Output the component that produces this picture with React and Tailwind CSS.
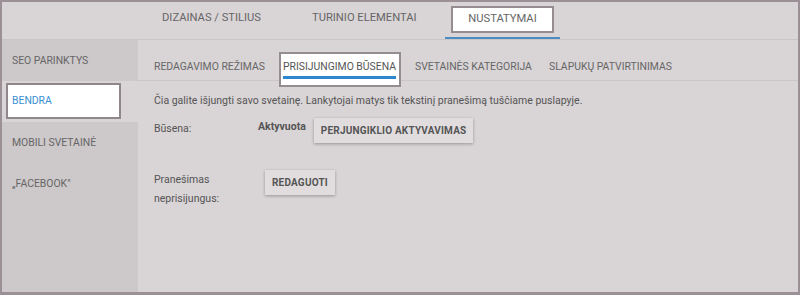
import React from 'react';

const sideItems = ['SEO PARINKTYS', 'BENDRA', 'MOBILI SVETAINĖ', '„FACEBOOK"'];

function Button({ children }) {
    return (
        <button className="h-[25px] px-[7px] bg-[#e1dddf] text-[10px] font-bold text-[#555] shadow-[0_1px_3px_rgba(0,0,0,0.3)] tracking-[0.2px]">
            {children}
        </button>
    );
}

export default function App() {
    return (
        <div className="w-[800px] h-[295px] border-2 border-b-[3px] border-[#9a9096] bg-[#d9d4d6] flex flex-col overflow-hidden" style={{ fontFamily: 'Roboto, "Liberation Sans", sans-serif' }}>
            {/* top tabs */}
            <div className="flex h-[38px] border-b border-[#c9c4c6] text-[11.2px] text-[#666] shrink-0">
                <div className="ml-[160px] w-[150px] flex items-center pb-[4px]">DIZAINAS / STILIUS</div>
                <div className="w-[133px] flex items-center pb-[4px]">TURINIO ELEMENTAI</div>
                <div className="w-[115px] flex flex-col items-center pt-[4px] border-b-[2px] border-[#4d8bc3]">
                    <div className="w-[103px] h-[27px] bg-white border-2 border-[#968d92] flex items-center justify-center">NUSTATYMAI</div>
                </div>
            </div>

            <div className="flex flex-1">
                {/* sidebar */}
                <div className="w-[136px] bg-[#cdc8ca] flex flex-col text-[10.4px] text-[#666]">
                    {sideItems.map((item) =>
                        item === 'BENDRA' ? (
                            <div key={item} className="h-[41px] bg-[#d9d4d6] pl-[4px] pt-[2px]">
                                <div className="w-[115px] h-[36px] bg-white border-2 border-[#8f878b] flex items-center pl-[4px] text-[#3a8fd2]">{item}</div>
                            </div>
                        ) : (
                            <div key={item} className="h-[41px] flex items-center pl-[10px]">{item}</div>
                        )
                    )}
                </div>

                {/* content */}
                <div className="flex-1 flex flex-col">
                    <div className="flex pl-[16px] h-[41px] border-b border-[#cbc6c8] text-[10.4px] text-[#666]">
                        <div className="w-[129px] pt-[20px] leading-[14px]">REDAGAVIMO REŽIMAS</div>
                        <div className="w-[132px] relative">
                            <div className="absolute -left-[4px] w-[122px] top-[12px] h-[35px] bg-white border-2 border-[#968d92]"></div>
                            <div className="relative inline-block pt-[20px] leading-[14px] text-[#555]">
                                PRISIJUNGIMO BŪSENA
                                <div className="mt-[2px] h-[3px] bg-[#2e86cf]"></div>
                            </div>
                        </div>
                        <div className="w-[134px] pt-[20px] leading-[14px]">SVETAINĖS KATEGORIJA</div>
                        <div className="pt-[20px] leading-[14px]">SLAPUKŲ PATVIRTINIMAS</div>
                    </div>

                    <div className="pl-[16px] text-[10.5px] text-[#555]">
                        <p className="mt-[12px] leading-[16px]">Čia galite išjungti savo svetainę. Lankytojai matys tik tekstinį pranešimą tuščiame puslapyje.</p>

                        <div className="flex mt-[9px]">
                            <div className="w-[104px] pt-[3px] leading-[16px]">Būsena:</div>
                            <div className="pt-[1px] leading-[16px] font-bold text-[#555]">Aktyvuota</div>
                            <div className="ml-[8px]"><Button>PERJUNGIKLIO AKTYVAVIMAS</Button></div>
                        </div>

                        <div className="flex mt-[27px]">
                            <div className="w-[111px] leading-[19px] pt-[0px]">Pranešimas<br />neprisijungus:</div>
                            <div><Button>REDAGUOTI</Button></div>
                        </div>
                    </div>
                </div>
            </div>
        </div>
    );
}
